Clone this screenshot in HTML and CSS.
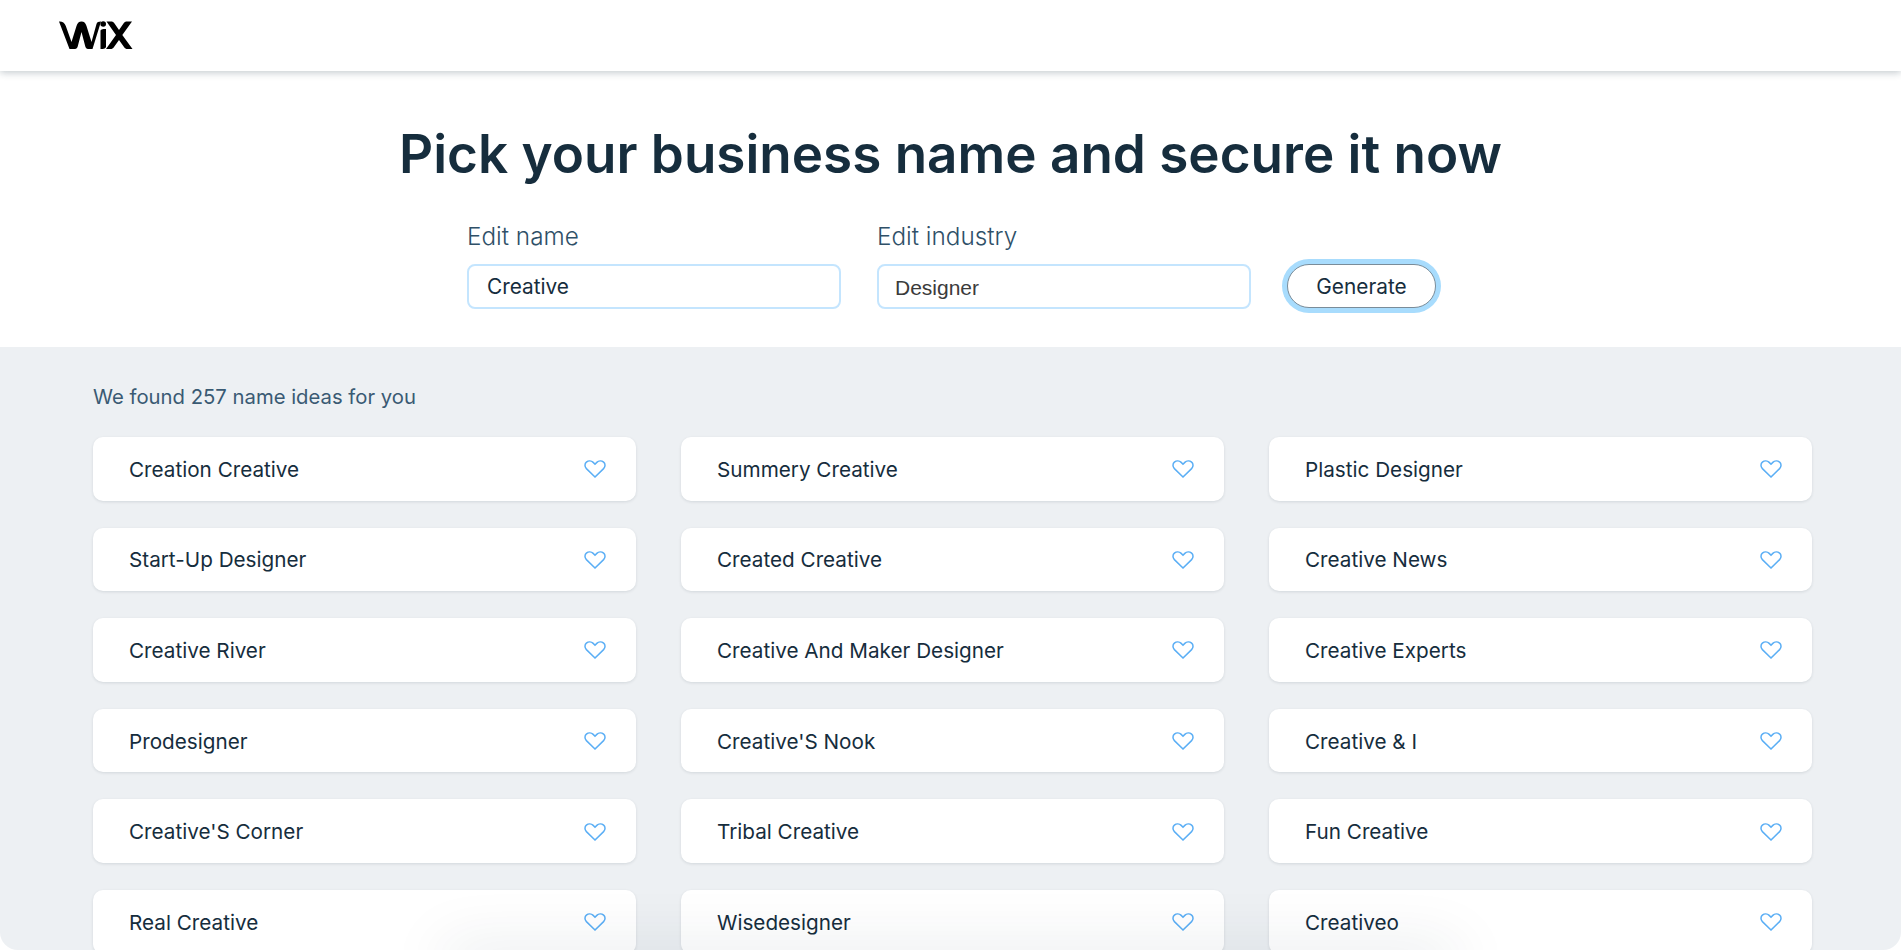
FILE: index.html
```html
<!DOCTYPE html>
<html lang="en">
<head>
  <meta charset="UTF-8" />
  <meta name="viewport" content="width=device-width, initial-scale=1.0"/>
  <title>Business Name Generator</title>
  <link rel="stylesheet" href="styles.css">
</head>
<body>

<svg class="icon-defs" width="0" height="0">
  <symbol id="heart" viewBox="0 0 22 18">
    <path d="M11 17 L2.4 8.6 C0.4 6.6 0.6 3.6 2.4 2.1 C4.4 0.4 7.4 0.6 9.2 2.4 L11 4.2 L12.8 2.4 C14.6 0.6 17.6 0.4 19.6 2.1 C21.4 3.6 21.6 6.6 19.6 8.6 Z" />
  </symbol>
</svg>

<div class="page">
  <!-- Top bar -->
  <header class="topbar">
    <svg class="logo" viewBox="0 0 74 28" width="74" height="28" aria-label="Wix">
      <path d="M0 0.5 C3 0.2 5.500 1.500 6.800 5 L12.500 21 L17.500 5 C18.500 1.800 20 0.500 22.500 0.500 C25 0.500 26.500 1.800 27.500 5 L32.500 21 L37.500 3 C38 1.200 39.500 0.500 42 0.500 L33.500 28 H29 C27.500 28 26.800 27 26.300 25.500 L22.500 11 L18.700 25.500 C18.200 27 17.500 28 16 28 H10.500 Z" />
      <path d="M41.500 10 C41.500 8.500 43 8 47 8 V25.500 C47 27.500 45 28 41.500 28 Z" />
      <circle cx="44.200" cy="3" r="2.800" />
      <path d="M47.500 0.500 H52 C53.500 0.500 54.500 1 55.500 2.500 L60 9 L64.500 2.500 C65.500 1 66.500 0.500 68 0.500 H73 L63.300 14 L73.500 28 H68.500 C67 28 66 27.500 65 26 L60 19 L55 26 C54 27.500 53 28 51.500 28 H47 L57 14 Z" />
    </svg>
  </header>

  <!-- Search form -->
  <section class="hero">
    <h1>Pick your business name and secure it now</h1>
    <form class="search-form">
      <div class="field">
        <label for="name">Edit name</label>
        <input type="text" id="name" value="Creative">
      </div>
      <div class="field">
        <label for="industry">Edit industry</label>
        <input type="text" id="industry" class="filled" value="Designer">
      </div>
      <button type="button">Generate</button>
    </form>
  </section>

  <!-- Name ideas -->
  <main class="results">
    <p class="results-count">We found 257 name ideas for you</p>
    <div class="name-grid">
      <div class="name-card"><span>Creation Creative</span><svg class="heart"><use href="#heart"/></svg></div>
      <div class="name-card"><span>Summery Creative</span><svg class="heart"><use href="#heart"/></svg></div>
      <div class="name-card"><span>Plastic Designer</span><svg class="heart"><use href="#heart"/></svg></div>
      <div class="name-card"><span>Start-Up Designer</span><svg class="heart"><use href="#heart"/></svg></div>
      <div class="name-card"><span>Created Creative</span><svg class="heart"><use href="#heart"/></svg></div>
      <div class="name-card"><span>Creative News</span><svg class="heart"><use href="#heart"/></svg></div>
      <div class="name-card"><span>Creative River</span><svg class="heart"><use href="#heart"/></svg></div>
      <div class="name-card"><span>Creative And Maker Designer</span><svg class="heart"><use href="#heart"/></svg></div>
      <div class="name-card"><span>Creative Experts</span><svg class="heart"><use href="#heart"/></svg></div>
      <div class="name-card"><span>Prodesigner</span><svg class="heart"><use href="#heart"/></svg></div>
      <div class="name-card"><span>Creative'S Nook</span><svg class="heart"><use href="#heart"/></svg></div>
      <div class="name-card"><span>Creative &amp; I</span><svg class="heart"><use href="#heart"/></svg></div>
      <div class="name-card"><span>Creative'S Corner</span><svg class="heart"><use href="#heart"/></svg></div>
      <div class="name-card"><span>Tribal Creative</span><svg class="heart"><use href="#heart"/></svg></div>
      <div class="name-card"><span>Fun Creative</span><svg class="heart"><use href="#heart"/></svg></div>
      <div class="name-card"><span>Real Creative</span><svg class="heart"><use href="#heart"/></svg></div>
      <div class="name-card"><span>Wisedesigner</span><svg class="heart"><use href="#heart"/></svg></div>
      <div class="name-card"><span>Creativeo</span><svg class="heart"><use href="#heart"/></svg></div>
    </div>
    <div class="bottom-shadow"></div>
  </main>
</div>

</body>
</html>
```

FILE: styles.css
```css
html, body {
  margin: 0;
  padding: 0;
  height: 950px;
  overflow: hidden;
  background: white;
  font-family: Inter, 'Noto Sans', sans-serif;
  color: #162d3d;
}

.icon-defs {
  display: block;
  height: 0;
}

.page {
  display: flex;
  flex-direction: column;
  height: 950px;
}

.topbar {
  position: relative;
  z-index: 2;
  flex: none;
  box-sizing: border-box;
  height: 71px;
  padding: 21px 0 0 59px;
  background: white;
  box-shadow: 0 2px 7px rgba(22,45,61,0.24);
}

.logo {
  display: block;
  fill: black;
}

.hero {
  flex: none;
  height: 276px;
  box-sizing: border-box;
  padding-top: 56px;
  background: white;
}

h1 {
  margin: 0 0 41px;
  text-align: center;
  font-size: 53px;
  line-height: 54px;
  font-weight: 600;
  color: #162d3d;
}

.search-form {
  display: flex;
  align-items: flex-end;
  gap: 36px;
  padding-left: 467px;
}

.field {
  width: 374px;
}

.field label {
  display: block;
  margin-bottom: 14px;
  font-size: 24.300px;
  font-weight: 300;
  line-height: 28px;
  color: #2f5068;
}

.field input {
  display: block;
  width: 100%;
  height: 45px;
  box-sizing: border-box;
  padding: 0 18px;
  border: 2px solid #c4e5fe;
  border-radius: 8px;
  font-family: inherit;
  font-size: 20.800px;
  color: #162d3d;
  outline: none;
}

.field input.filled {
  padding: 2px 16px 0;
  font-family: 'Liberation Sans', sans-serif;
  font-size: 21px;
  color: #3b3b3b;
}

.search-form button {
  box-sizing: border-box;
  width: 149px;
  height: 44px;
  margin: 0 0 1px;
  background: white;
  border: 1px solid #7a8c99;
  border-radius: 22px;
  box-shadow: 0 0 0 5px #a8dcfd;
  font-family: inherit;
  font-size: 20.800px;
  color: #162d3d;
  cursor: pointer;
}

.results {
  position: relative;
  flex: 1;
  overflow: hidden;
  padding: 0 89px 0 93px;
  background: #edf0f3;
  border-radius: 0 0 18px 18px;
}

.results-count {
  margin: 36px 0 26px;
  font-size: 20.300px;
  line-height: 28px;
  color: #3a5a73;
}

.name-grid {
  display: grid;
  grid-template-columns: repeat(3, 1fr);
  column-gap: 45px;
  row-gap: 27px;
}

.name-card {
  display: flex;
  align-items: center;
  justify-content: space-between;
  height: 63.6px;
  padding: 0 30px 0 36px;
  background: white;
  border-radius: 10px;
  box-shadow: 0 1px 3px rgba(22,45,61,0.12);
  font-size: 20.700px;
  color: #162d3d;
}

.name-card span {
  padding-top: 1px;
}

.heart {
  flex: none;
  width: 22px;
  height: 18px;
  margin-top: 1px;
  fill: none;
  stroke: #5aaef5;
  stroke-width: 1.5px;
}

.bottom-shadow {
  position: absolute;
  left: 450px;
  right: 450px;
  bottom: -16px;
  height: 10px;
  box-shadow: 0 0 60px 6px rgba(22,45,61,0.15);
}
```
